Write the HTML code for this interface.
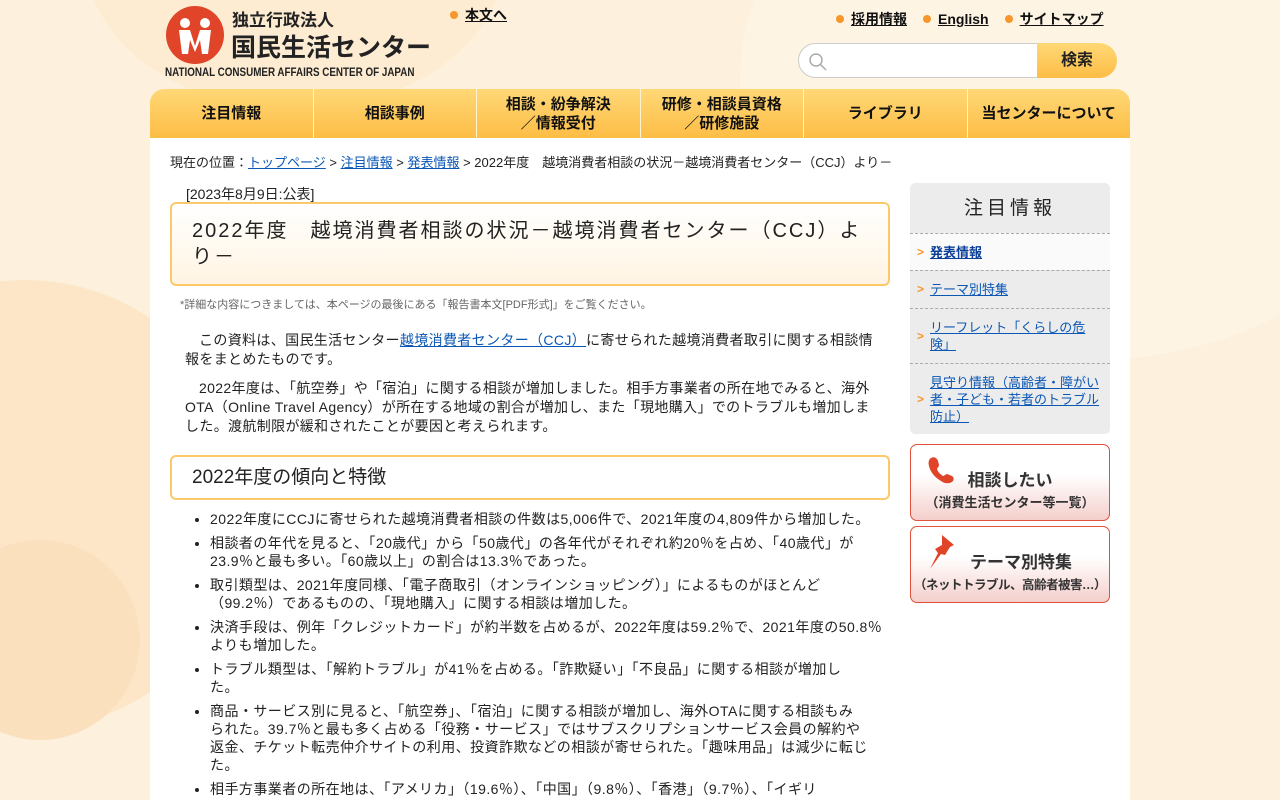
<!DOCTYPE html>
<html style="overflow:hidden;height:800px"><head><meta charset="utf-8"><style>
*{margin:0;padding:0;box-sizing:border-box}
body{width:1280px;height:800px;overflow:hidden;background:#fdf0dc;font-family:"Liberation Sans","Noto Sans CJK JP",sans-serif;color:#222;position:relative}
.c{position:absolute;border-radius:50%}
a{color:#0b57b5;text-decoration:underline}
.top a{color:#111;font-weight:bold;font-size:14px}
.dot{display:inline-block;width:8px;height:8px;border-radius:50%;background:#f7962b;margin-right:7px;vertical-align:1px}
.nav{position:absolute;left:150px;top:89px;width:980px;height:49px;display:flex;border-radius:14px 14px 0 0;overflow:hidden}
.nav div{flex:1;background:linear-gradient(#ffd877,#fdbd45);border-right:1px solid #fff3d0;display:flex;align-items:center;justify-content:center;text-align:center;font-weight:bold;font-size:15px;line-height:19px;color:#111}
.nav div:last-child{border-right:none}
.main{position:absolute;left:150px;top:138px;width:980px;height:662px;background:#fff}
.side a{font-size:13px}
.sl{border-top:1px dashed #aaa;padding:0 10px 0 20px;position:relative;display:flex;align-items:center;line-height:17px}
.sl:before{content:">";position:absolute;left:7px;color:#f7962b;font-size:12px;font-weight:bold}
ul{list-style:disc;padding-left:40px;font-size:14px;line-height:18px;letter-spacing:.45px}
li{margin-bottom:6px;white-space:nowrap}
p{font-size:14px;line-height:19px;text-indent:14px;letter-spacing:.35px}
.btn{position:absolute;left:910px;width:200px;border:1px solid #e0503a;border-radius:7px;background:linear-gradient(#fff 40%,#f4cfcb);text-align:center;font-weight:bold;color:#333}
</style></head><body>
<div class="c" style="left:-200px;top:280px;width:450px;height:450px;background:#fde6c7"></div>
<div class="c" style="left:-60px;top:540px;width:200px;height:200px;background:#fbe0bd"></div>
<div class="c" style="left:740px;top:-200px;width:700px;height:560px;background:#fef5e6;opacity:.7"></div>
<div class="c" style="left:85px;top:-200px;width:420px;height:310px;background:#fde9cc;opacity:.6"></div>

<div style="position:absolute;left:166px;top:6px;width:58px;height:58px;border-radius:50%;background:#e0452a"></div>
<svg style="position:absolute;left:166px;top:6px" width="58" height="58"><g fill="#fff"><circle cx="19" cy="17" r="5"/><circle cx="39" cy="17" r="5"/><path d="M13 24h11l5 16 5-16h11l-3 24h-6l-2-14-5 12-5-12-2 14h-6z"/></g></svg>
<div style="position:absolute;left:232px;top:11px;font-size:17px;line-height:20px;font-weight:bold;color:#222">独立行政法人</div>
<div style="position:absolute;left:231px;top:32px;font-size:25px;font-weight:bold;color:#222;line-height:32px">国民生活センター</div>
<div style="position:absolute;left:165px;top:65px;font-size:12px;font-weight:bold;color:#222;white-space:nowrap;transform:scaleX(.82);transform-origin:left">NATIONAL CONSUMER AFFAIRS CENTER OF JAPAN</div>

<div class="top" style="position:absolute;left:450px;top:5px"><span class="dot"></span><a>本文へ</a></div>
<div class="top" style="position:absolute;left:836px;top:5px"><span class="dot"></span><a>採用情報</a>　<span class="dot"></span><a>English</a>　<span class="dot"></span><a>サイトマップ</a></div>
<div style="position:absolute;left:798px;top:43px;width:242px;height:35px;border:1px solid #ccc;border-radius:18px 0 0 18px;background:#fff"></div>
<svg style="position:absolute;left:808px;top:52px" width="20" height="20"><circle cx="8" cy="8" r="6" fill="none" stroke="#aaa" stroke-width="1.5"/><path d="M12 12l6 6" stroke="#aaa" stroke-width="1.5"/></svg>
<div style="position:absolute;left:1037px;top:43px;width:80px;height:35px;border-radius:0 18px 18px 0;background:linear-gradient(#ffd877,#fdbd45);font-weight:bold;font-size:16px;text-align:center;line-height:35px">検索</div>

<div class="nav"><div>注目情報</div><div>相談事例</div><div>相談・紛争解決<br>／情報受付</div><div>研修・相談員資格<br>／研修施設</div><div>ライブラリ</div><div>当センターについて</div></div>
<div class="main"></div>

<div style="position:absolute;left:170px;top:152px;font-size:13px">現在の位置：<a>トップページ</a> &gt; <a>注目情報</a> &gt; <a>発表情報</a> &gt; 2022年度　越境消費者相談の状況－越境消費者センター（CCJ）より－</div>
<div style="position:absolute;left:186px;top:184px;font-size:14px">[2023年8月9日:公表]</div>
<div style="position:absolute;left:170px;top:202px;width:720px;height:84px;border:2px solid #fcc96a;border-radius:6px;background:linear-gradient(#fff,#fff4e2);padding:14px 20px;font-size:20px;line-height:26px;letter-spacing:2px">2022年度　越境消費者相談の状況－越境消費者センター（CCJ）より－</div>
<div style="position:absolute;left:180px;top:296px;font-size:11px;color:#666">*詳細な内容につきましては、本ページの最後にある「報告書本文[PDF形式]」をご覧ください。</div>
<div style="position:absolute;left:185px;top:331px;width:695px">
<p>この資料は、国民生活センター<a>越境消費者センター（CCJ）</a>に寄せられた越境消費者取引に関する相談情報をまとめたものです。</p>
<p style="margin-top:10px">2022年度は、「航空券」や「宿泊」に関する相談が増加しました。相手方事業者の所在地でみると、海外OTA（Online Travel Agency）が所在する地域の割合が増加し、また「現地購入」でのトラブルも増加しました。渡航制限が緩和されたことが要因と考えられます。</p></div>
<div style="position:absolute;left:170px;top:455px;width:720px;height:45px;border:2px solid #fcc96a;border-radius:6px;padding:0 20px;font-size:19px;line-height:41px">2022年度の傾向と特徴</div>
<ul style="position:absolute;left:170px;top:510px;width:740px">
<li>2022年度にCCJに寄せられた越境消費者相談の件数は5,006件で、2021年度の4,809件から増加した。</li>
<li>相談者の年代を見ると、「20歳代」から「50歳代」の各年代がそれぞれ約20％を占め、「40歳代」が<br>23.9％と最も多い。「60歳以上」の割合は13.3％であった。</li>
<li>取引類型は、2021年度同様、「電子商取引（オンラインショッピング）」によるものがほとんど<br>（99.2％）であるものの、「現地購入」に関する相談は増加した。</li>
<li>決済手段は、例年「クレジットカード」が約半数を占めるが、2022年度は59.2％で、2021年度の50.8％<br>よりも増加した。</li>
<li>トラブル類型は、「解約トラブル」が41％を占める。「詐欺疑い」「不良品」に関する相談が増加し<br>た。</li>
<li>商品・サービス別に見ると、「航空券」、「宿泊」に関する相談が増加し、海外OTAに関する相談もみ<br>られた。39.7％と最も多く占める「役務・サービス」ではサブスクリプションサービス会員の解約や<br>返金、チケット転売仲介サイトの利用、投資詐欺などの相談が寄せられた。「趣味用品」は減少に転じ<br>た。</li>
<li>相手方事業者の所在地は、「アメリカ」（19.6％）、「中国」（9.8％）、「香港」（9.7％）、「イギリ</li>
</ul>

<div class="side" style="position:absolute;left:910px;top:183px;width:200px;height:251px;background:#ececec;border-radius:5px;overflow:hidden">
<div style="height:50px;text-align:center;line-height:52px;font-size:19px;letter-spacing:4px">注目情報</div>
<div class="sl" style="height:37px;background:#fafafa"><a style="font-weight:bold;color:#0b3f9a">発表情報</a></div>
<div class="sl" style="height:38px"><a>テーマ別特集</a></div>
<div class="sl" style="height:55px"><a>リーフレット「くらしの危険」</a></div>
<div class="sl" style="height:71px"><a>見守り情報（高齢者・障がい者・子ども・若者のトラブル防止）</a></div>
</div>

<div class="btn" style="top:444px;height:77px">
<svg style="position:absolute;left:16px;top:10px" width="30" height="30"><path d="M4 3c3-2 6 0 7 3l1 4c0 2-2 3-2 4 1 3 3 5 6 7 1 0 3-2 4-2l5 2c2 1 2 4 1 5-3 3-8 3-12 0C7 22 3 16 2 11 1 7 2 4 4 3z" fill="#e0452a"/></svg>
<div style="font-size:17px;margin-top:21px">相談したい</div><div style="font-size:13px;margin-top:1px">（消費生活センター等一覧）</div></div>
<div class="btn" style="top:526px;height:77px">
<svg style="position:absolute;left:16px;top:6px" width="30" height="40"><path d="M15 2l12 10-4 2-5 8-4-1-11 15 8-16-3-4 7-4z" fill="#e0452a"/></svg>
<div style="font-size:17px;margin-top:21px;padding-left:22px">テーマ別特集</div><div style="font-size:12.5px;margin-top:1px;white-space:nowrap;letter-spacing:-.5px">（ネットトラブル、高齢者被害…）</div></div>
</body></html>
